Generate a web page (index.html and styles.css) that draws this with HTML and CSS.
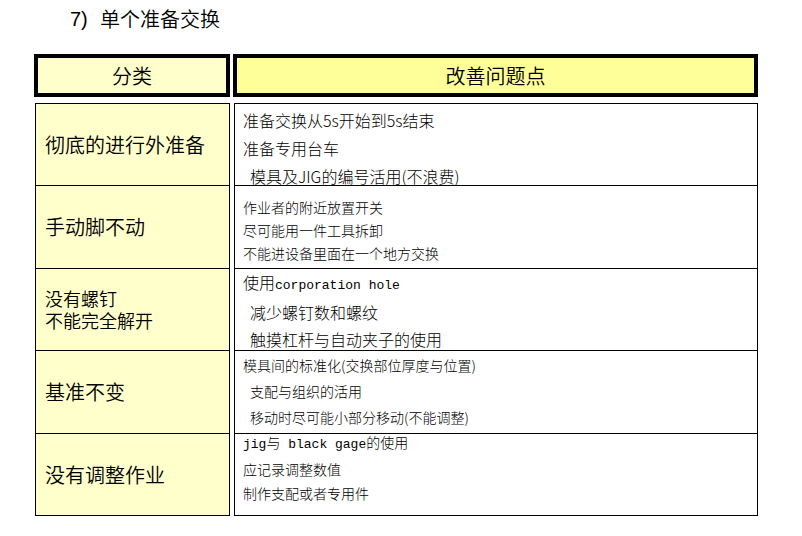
FILE: index.html
```html
<!DOCTYPE html>
<html lang="zh-CN">
<head>
<meta charset="utf-8">
<title>单个准备交换</title>
<link rel="stylesheet" href="styles.css">
</head>
<body>
<div class="page">
  <h1 class="title"><span class="num">7)</span><span>单个准备交换</span></h1>
  <div class="head">
    <div class="h-left">分类</div>
    <div class="h-right">改善问题点</div>
  </div>
  <div class="grid">
    <div class="cell left first">彻底的进行外准备</div>
    <div class="cell right first r1">
      <div>准备交换从5s开始到5s结束</div>
      <div>准备专用台车</div>
      <div class="ind">模具及JIG的编号活用(不浪费)</div>
    </div>

    <div class="cell left">手动脚不动</div>
    <div class="cell right r2">
      <div>作业者的附近放置开关</div>
      <div>尽可能用一件工具拆卸</div>
      <div>不能进设备里面在一个地方交换</div>
    </div>

    <div class="cell left small">
      <div class="stack">
        <div>没有螺钉</div>
        <div>不能完全解开</div>
      </div>
    </div>
    <div class="cell right r3">
      <div>使用<span class="mono">corporation hole</span></div>
      <div class="ind">减少螺钉数和螺纹</div>
      <div class="ind">触摸杠杆与自动夹子的使用</div>
    </div>

    <div class="cell left">基准不变</div>
    <div class="cell right r4">
      <div>模具间的标准化(交换部位厚度与位置)</div>
      <div class="ind">支配与组织的活用</div>
      <div class="ind">移动时尽可能小部分移动(不能调整)</div>
    </div>

    <div class="cell left">没有调整作业</div>
    <div class="cell right r5">
      <div class="lines">
        <div><span class="mono">jig</span>与<span class="mono"> black gage</span>的使用</div>
        <div>应记录调整数值</div>
        <div>制作支配或者专用件</div>
      </div>
    </div>
  </div>
</div>
</body>
</html>
```

FILE: styles.css
```css
html, body {
  margin: 0;
  padding: 0;
  background: #ffffff;
}

body {
  font-family: "Noto Sans CJK SC", "Liberation Sans", sans-serif;
  font-weight: 350;
  color: #000;
}

.page {
  padding-top: 7px;
}

.title {
  display: flex;
  margin: 0 0 23px 70px;
  font-size: 20px;
  font-weight: 350;
  line-height: 24px;
}

.title .num {
  width: 30px;
  font-family: "Liberation Sans", sans-serif;
  font-weight: normal;
}

.head {
  display: flex;
  gap: 3px;
  margin-left: 34px;
  height: 43px;
}

.h-left,
.h-right {
  box-sizing: border-box;
  border: 4px solid #000;
  display: flex;
  align-items: center;
  justify-content: center;
  font-size: 20px;
  line-height: 24px;
}

.h-left {
  width: 196px;
  background: #ffffcc;
}

.h-right {
  width: 525px;
  background: #ffff99;
}

.grid {
  display: grid;
  margin: 6px 0 0 35px;
  grid-template-columns: 195px 524px;
  grid-template-rows: 83px 83px 82px 83px 82px;
  column-gap: 4px;
}

.cell {
  box-sizing: border-box;
  border: 1px solid #000;
  border-top: none;
}

.cell.first {
  border-top: 1px solid #000;
}

.left {
  background: #ffffcc;
  display: flex;
  align-items: center;
  padding-left: 9px;
  font-size: 20px;
  line-height: 24px;
}

.left.small {
  font-size: 18px;
  line-height: 21px;
}

.stack {
  display: flex;
  flex-direction: column;
  gap: 1px;
}

.right {
  padding-left: 8px;
  font-size: 14px;
  font-weight: 300;
}

.ind {
  padding-left: 7px;
}

.mono {
  font-family: "Liberation Mono", monospace;
  font-size: 13px;
  font-weight: normal;
}

.r1 {
  font-size: 16px;
  line-height: 28px;
  padding-top: 2px;
}

.r2 {
  line-height: 23px;
  padding-top: 10px;
}

.r3 {
  font-size: 16px;
  line-height: 27px;
}

.r4 {
  line-height: 26px;
  padding-top: 1px;
}

.r5 {
  line-height: 24px;
}

.r5 .lines {
  margin-top: -4px;
}
```
